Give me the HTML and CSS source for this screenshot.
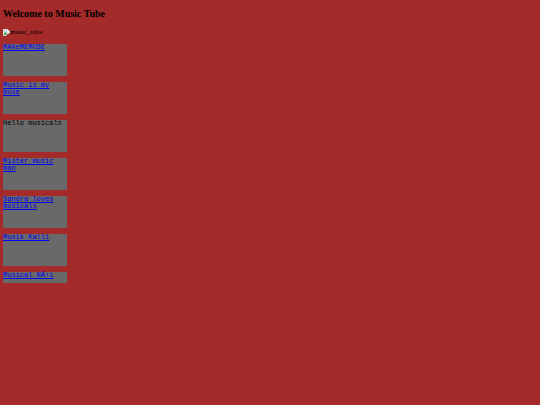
FILE: index.html
```html
<!DOCTYPE html>
<html lang="en">
<head>
    <meta charset="UTF-8">
    <meta name="viewport" content="width=device-width, initial-scale=1.0">
    <title>Music Tube</title>
    <link rel="stylesheet" href="styles.css">
</head>
<body>

    <h2 class="title">Welcome to Music Tube</h2>

    <!-- Logo -->
    <div class="logo">
        <svg class="logo-icon" viewBox="0 0 16 16" aria-hidden="true">
            <path d="M1 1h9l5 5v3l-5 1-3 5H1z" fill="#c6dcf5" stroke="#f1f1f1" stroke-width="2"/>
            <path d="M10 1v5h5z" fill="#fff"/>
            <path d="M2 14v-3l4-4 3 3-3 4z" fill="#4fa545"/>
        </svg><span>music_tube</span>
    </div>

    <div class="list">
        <div class="box"><a href="#">MAkeMEMUSE</a></div>
        <div class="box"><a href="#">Music is my muse</a></div>
        <div class="box">Hello musicals</div>
        <div class="box"><a href="#">Mister music man</a></div>
        <div class="box"><a href="#">Sandra loves musicals</a></div>
        <div class="box"><a href="#">Musik Kalli</a></div>
        <div class="box last"><a href="#">Musical NÃ³i</a></div>
    </div>

</body>
</html>
```

FILE: styles.css
```css
body {
    margin: 0;
    padding: 8px 3px;
    background-color: brown;
    font-family: "Liberation Serif", serif;
    font-size: 7px;
}

.title {
    margin: 0 0 8px;
    font-size: 10px;
    line-height: 12px;
}

/* Logo */
.logo {
    display: flex;
    align-items: center;
    height: 8px;
    margin-bottom: 8px;
    line-height: 8px;
}

.logo-icon {
    width: 7px;
    height: 7px;
}

/* Music list */
.list {
    display: flex;
    flex-direction: column;
    gap: 6px;
}

.box {
    width: 64px;
    height: 32px;
    background-color: dimgray;
    font-family: "Liberation Mono", monospace;
    font-size: 7px;
    line-height: 7px;
}

.box a {
    color: #0000ee;
}

.last {
    height: 11px;
}
```
